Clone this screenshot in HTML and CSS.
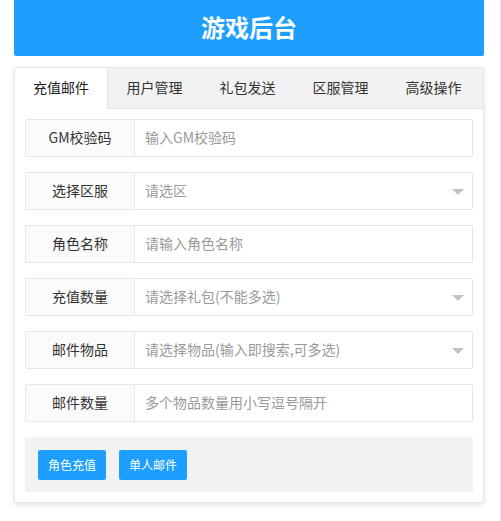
FILE: index.html
```html
<!DOCTYPE html>
<html lang="zh-CN">
<head>
<meta charset="utf-8">
<title>游戏后台</title>
<link rel="stylesheet" href="styles.css">
</head>
<body>
<div class="page">
  <header class="header">游戏后台</header>
  <div class="card">
    <ul class="tabs">
      <li class="tab active">充值邮件</li>
      <li class="tab">用户管理</li>
      <li class="tab">礼包发送</li>
      <li class="tab">区服管理</li>
      <li class="tab">高级操作</li>
    </ul>
    <div class="content">
      <div class="row">
        <label class="label">GM校验码</label>
        <div class="field"><span class="ph">输入GM校验码</span></div>
      </div>
      <div class="row">
        <label class="label">选择区服</label>
        <div class="field select"><span class="ph">请选区</span><i class="arrow"></i></div>
      </div>
      <div class="row">
        <label class="label">角色名称</label>
        <div class="field"><span class="ph">请输入角色名称</span></div>
      </div>
      <div class="row">
        <label class="label">充值数量</label>
        <div class="field select"><span class="ph">请选择礼包(不能多选)</span><i class="arrow"></i></div>
      </div>
      <div class="row">
        <label class="label">邮件物品</label>
        <div class="field select"><span class="ph">请选择物品(输入即搜索,可多选)</span><i class="arrow"></i></div>
      </div>
      <div class="row">
        <label class="label">邮件数量</label>
        <div class="field"><span class="ph">多个物品数量用小写逗号隔开</span></div>
      </div>
      <div class="actions">
        <button class="btn">角色充值</button>
        <button class="btn">单人邮件</button>
      </div>
    </div>
  </div>
</div>
</body>
</html>
```

FILE: styles.css
```css
* { box-sizing: border-box; }
html, body { margin: 0; padding: 0; background: #fff; }
body {
  font-family: "Noto Sans CJK SC", "Microsoft YaHei", "Liberation Sans", sans-serif;
  font-size: 14px;
  color: #333;
  border-right: 1px solid #e8e8e8;
  min-height: 521px;
}
.page {
  width: 470px;
  margin-left: 14px;
}
.header {
  height: 56px;
  background: #1E9FFF;
  color: #fff;
  font-size: 24px;
  font-weight: bold;
  text-align: center;
  line-height: 54px;
  border-radius: 0 0 2px 2px;
}
.card {
  margin-top: 11px;
  border: 1px solid #e6e6e6;
  border-radius: 2px;
  box-shadow: 0 2px 5px 0 rgba(0,0,0,.1);
  background: #fff;
}
.tabs {
  display: flex;
  margin: 0;
  padding: 0;
  list-style: none;
  height: 41px;
  background: #f2f2f2;
  border-bottom: 1px solid #e6e6e6;
}
.tab {
  width: 93px;
  flex: none;
  text-align: center;
  line-height: 39px;
  font-size: 14px;
  color: #333;
}
.tab.active {
  background: #fff;
  color: #222;
  height: 41px;
  border-right: 1px solid #e6e6e6;
}
.content { padding: 10px; }
.row {
  display: flex;
  height: 38px;
  margin-bottom: 15px;
}
.label {
  width: 110px;
  flex: none;
  border: 1px solid #e6e6e6;
  background: #fbfbfb;
  text-align: center;
  line-height: 35px;
  color: #333;
  font-size: 14px;
  border-radius: 2px 0 0 2px;
}
.field {
  flex: 1;
  position: relative;
  border: 1px solid #e6e6e6;
  border-left: none;
  padding-left: 10px;
  line-height: 35px;
  border-radius: 0 2px 2px 0;
}
.ph { color: #9a9a9a; font-size: 14px; }
.arrow {
  position: absolute;
  right: 8px;
  top: 16px;
  width: 0;
  height: 0;
  border-left: 6px solid transparent;
  border-right: 6px solid transparent;
  border-top: 6px solid #c2c2c2;
}
.actions {
  background: #f2f2f2;
  padding: 13px 13px 12px;
  display: flex;
  gap: 13px;
}
.btn {
  height: 30px;
  width: 68px;
  padding: 0;
  border: none;
  border-radius: 2px;
  background: #1E9FFF;
  color: #fff;
  font-family: inherit;
  font-size: 12px;
  line-height: 28px;
}
```
